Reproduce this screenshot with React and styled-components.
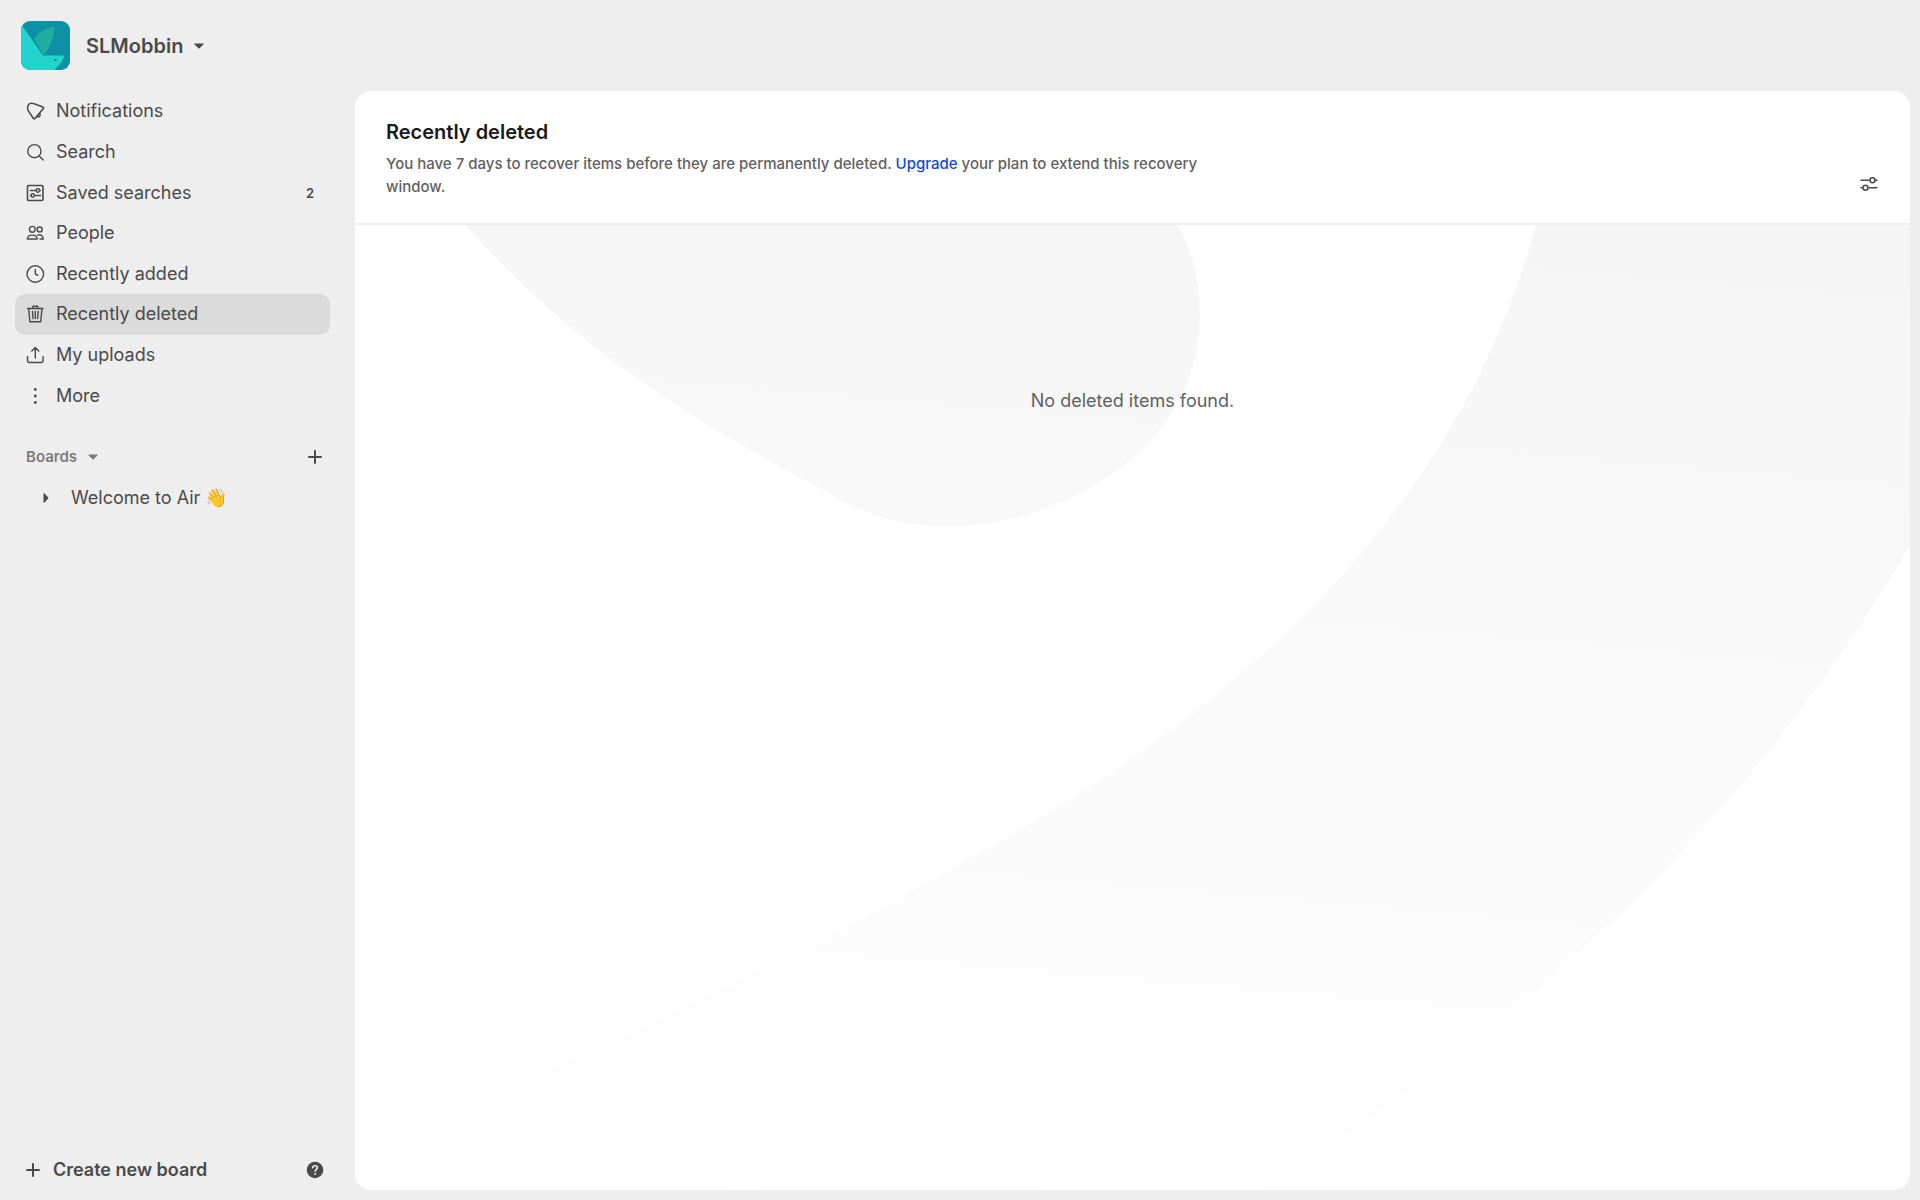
import React from 'react';
import styled, { createGlobalStyle } from 'styled-components';

const GlobalStyle = createGlobalStyle`
  * {
    box-sizing: border-box;
  }
  body {
    margin: 0;
    background: #eeeeee;
    color: #4a4a4a;
    font-family: Inter, 'Liberation Sans', sans-serif;
    font-size: 18px;
    line-height: 24px;
  }
  button {
    font: inherit;
    color: inherit;
    background: none;
    border: none;
    padding: 0;
    cursor: pointer;
  }
  a {
    color: inherit;
    text-decoration: none;
  }
  svg {
    display: block;
    flex-shrink: 0;
  }
`;

const Layout = styled.div`
  min-height: 100vh;
  display: grid;
  grid-template-columns: 355px minmax(0, 1fr);
  grid-template-rows: 91px minmax(0, 1fr);
`;

const TopBar = styled.header`
  grid-column: 1 / -1;
  display: flex;
  align-items: center;
  padding: 0 21px;
`;

const WorkspaceButton = styled.button`
  display: flex;
  align-items: center;
  gap: 16px;
  font-size: 20px;
  font-weight: 600;
`;

const WorkspaceName = styled.span`
  display: flex;
  align-items: center;
  gap: 11px;
`;

const Sidebar = styled.aside`
  display: flex;
  flex-direction: column;
  padding: 0 25px 10px 15px;
`;

const NavList = styled.ul`
  display: grid;
  grid-auto-rows: 1fr;
  height: 325px;
  list-style: none;
  margin: 0;
  padding: 0;
`;

const NavItem = styled.a`
  display: flex;
  align-items: center;
  gap: 11px;
  height: 100%;
  padding: 0 16px 0 10px;
  border-radius: 10px;
  background: ${({ $active }) => ($active ? '#dbdbdb' : 'transparent')};
`;

const NavCount = styled.span`
  margin-left: auto;
  font-size: 13px;
  font-weight: 600;
`;

const BoardsHeader = styled.div`
  display: flex;
  align-items: center;
  justify-content: space-between;
  height: 41px;
  margin-top: 20px;
  padding: 0 1px 0 11px;
`;

const BoardsToggle = styled.button`
  display: flex;
  align-items: center;
  gap: 11px;
  color: #7c7c7c;
  font-size: 15px;
  font-weight: 600;
`;

const IconButton = styled.button`
  display: flex;
  align-items: center;
  justify-content: center;
  width: 28px;
  height: 28px;
`;

const BoardItem = styled.a`
  display: flex;
  align-items: center;
  gap: 22px;
  height: 41px;
  padding-left: 28px;
`;

const SidebarFooter = styled.footer`
  display: flex;
  align-items: center;
  justify-content: space-between;
  height: 41px;
  margin-top: auto;
  padding: 0 1px 0 8px;
`;

const CreateButton = styled.button`
  display: flex;
  align-items: center;
  gap: 10px;
  font-weight: 600;
`;

const Panel = styled.main`
  display: flex;
  flex-direction: column;
  margin: 0 10px 10px 0;
  border-radius: 16px;
  background: #ffffff;
  overflow: hidden;
`;

const PanelHeader = styled.div`
  display: flex;
  align-items: flex-end;
  justify-content: space-between;
  padding: 27px 27px 25px 31px;
  border-bottom: 2px solid #eeeeee;
`;

const Title = styled.h1`
  margin: 0 0 6px;
  color: #1a1a1a;
  font-size: 20px;
  font-weight: 600;
  line-height: 28px;
`;

const Description = styled.p`
  max-width: 850px;
  margin: 0;
  color: #616161;
  font-size: 15px;
  font-weight: 500;
  line-height: 23px;
`;

const UpgradeLink = styled.a`
  color: #0f4bd8;
`;

const PanelBody = styled.section`
  position: relative;
  flex: 1;
  padding: 164px 20px;
  text-align: center;
  color: #616161;
`;

const Backdrop = styled.svg`
  position: absolute;
  inset: 0;
  width: 100%;
  height: 100%;
`;

const EmptyText = styled.p`
  position: relative;
  margin: 0;
`;

const Icon = ({ children }) => (
  <svg
    width="20"
    height="20"
    viewBox="0 0 20 20"
    fill="none"
    stroke="currentColor"
    strokeWidth="1.4"
    strokeLinecap="round"
    strokeLinejoin="round"
    aria-hidden="true"
  >
    {children}
  </svg>
);

const BellIcon = () => (
  <Icon>
    <path
      d="M2.8 5.4 3.9 3.2c1.6-1.2 4.200-1 6-.3l8 3c.7.3.9.9.5 1.500L9.900 17.500c-.5.6-1.300.5-1.600-.2L3 9.400c-.5-1.300-.6-2.700-.2-4Z"
      strokeWidth="1.6"
    />
    <path d="M12.600 15.800c1.700.5 2.900-.9 2.400-2.800" strokeWidth="1.6" />
  </Icon>
);

const SearchIcon = () => (
  <Icon>
    <circle cx="9.4" cy="9.2" r="6.6" />
    <path d="m14.200 14 4 4" />
  </Icon>
);

const SavedIcon = () => (
  <Icon>
    <rect x="2.5" y="2.5" width="15.500" height="15" rx="1" strokeWidth="1.6" />
    <path d="M5.500 7.500h5.500M14.500 7.500H15.500M5.500 12.500h.5M9.500 12.500h6" />
    <circle cx="12.800" cy="7.500" r="1.700" />
    <circle cx="7.700" cy="12.500" r="1.700" />
  </Icon>
);

const PeopleIcon = () => (
  <Icon>
    <circle cx="7.300" cy="6.300" r="2.900" />
    <circle cx="14.700" cy="6.500" r="2.500" />
    <path d="M2.300 16c.4-2.500 2.300-3.900 5-3.900s4.600 1.400 5 3.900ZM12.600 12.100c2.700-1 5.300.5 5.700 3.900h-3.300" />
  </Icon>
);

const ClockIcon = () => (
  <Icon>
    <circle cx="10.300" cy="10" r="8.300" />
    <path d="M10.300 5.500V10l2.600 1.300" />
  </Icon>
);

const TrashIcon = () => (
  <Icon>
    <path d="M2.600 4.500h15.400M7.300 4.500l.7-2.200h4.600l.7 2.200M3.600 4.500l1.300 13.200h10.800l1.300-13.200M7.500 7.500l.5 7M10.300 7.500v7M13.100 7.500l-.5 7" />
  </Icon>
);

const UploadIcon = () => (
  <Icon>
    <path d="M10.300 13V2.500M6.800 6l3.500-3.500L13.800 6M2.500 11.500v4c0 1.200.8 2 2 2h11.600c1.200 0 2-.8 2-2v-4" />
  </Icon>
);

const MoreIcon = () => (
  <Icon>
    <g fill="currentColor" stroke="none">
      <circle cx="10.300" cy="3.500" r="1.400" />
      <circle cx="10.300" cy="10" r="1.400" />
      <circle cx="10.300" cy="16.500" r="1.400" />
    </g>
  </Icon>
);

const PlusIcon = () => (
  <Icon>
    <path d="M10 4v12M4 10h12" strokeWidth="2" />
  </Icon>
);

const SlidersIcon = () => (
  <Icon>
    <path d="M2 6.200h8.500M16 6.200h2M2 13.800h1.500M9.500 13.800H18" strokeWidth="1.500" />
    <circle cx="13.500" cy="6.200" r="2.500" strokeWidth="1.500" />
    <circle cx="6.500" cy="13.800" r="2.500" strokeWidth="1.500" />
  </Icon>
);

const HelpIcon = () => (
  <Icon>
    <circle cx="10" cy="10" r="8.300" fill="currentColor" stroke="none" />
    <path
      d="M7.700 7.800c.2-2.800 4.700-2.700 4.700 0 0 1.500-2.200 1.700-2.200 3.400"
      stroke="#eeeeee"
      strokeWidth="1.600"
    />
    <circle cx="10.200" cy="14" r="1" fill="#eeeeee" stroke="none" />
  </Icon>
);

const CaretDown = () => (
  <svg width="10" height="6" viewBox="0 0 10 6" fill="currentColor" aria-hidden="true">
    <path d="M1 .5h8c.7 0 .9.700.4 1.100L5.600 5.200c-.4.4-.8.4-1.200 0L.6 1.600C.1 1.200.3.5 1 .5Z" />
  </svg>
);

const CaretRight = () => (
  <svg width="6" height="10" viewBox="0 0 6 10" fill="currentColor" aria-hidden="true">
    <path d="M.5 1v8c0 .7.700.9 1.100.4l3.600-3.800c.4-.4.4-.8 0-1.200L1.600.6C1.200.1.5.3.5 1Z" />
  </svg>
);

const Logo = () => (
  <svg width="49" height="49" viewBox="0 0 49 49" aria-hidden="true">
    <clipPath id="logo-clip">
      <rect width="49" height="49" rx="9" />
    </clipPath>
    <g clipPath="url(#logo-clip)">
      <path d="M0 0h49v49H0Z" fill="#0e90a5" />
      <path d="M13 18C18 11 25 7 34 5.500 33 15 29 26 23 34Z" fill="#1fad9f" />
      <path d="M0 3 22 34.500h21.500C42 40 38 45 33 49H0Z" fill="#22d3cb" />
      <circle cx="34.500" cy="39" r="1" fill="#0b5f70" />
    </g>
  </svg>
);

const navItems = [
  { label: 'Notifications', icon: BellIcon },
  { label: 'Search', icon: SearchIcon },
  { label: 'Saved searches', icon: SavedIcon, count: 2 },
  { label: 'People', icon: PeopleIcon },
  { label: 'Recently added', icon: ClockIcon },
  { label: 'Recently deleted', icon: TrashIcon, active: true },
  { label: 'My uploads', icon: UploadIcon },
  { label: 'More', icon: MoreIcon },
];

const App = () => {
  return (
    <>
      <GlobalStyle />
      <Layout>
        <TopBar>
          <WorkspaceButton>
            <Logo />
            <WorkspaceName>
              SLMobbin <CaretDown />
            </WorkspaceName>
          </WorkspaceButton>
        </TopBar>
        <Sidebar>
          <nav>
            <NavList>
              {navItems.map(({ label, icon: ItemIcon, count, active }) => (
                <li key={label}>
                  <NavItem href="#" $active={active}>
                    <ItemIcon />
                    {label}
                    {count && <NavCount>{count}</NavCount>}
                  </NavItem>
                </li>
              ))}
            </NavList>
          </nav>
          <BoardsHeader>
            <BoardsToggle>
              Boards <CaretDown />
            </BoardsToggle>
            <IconButton aria-label="Add board">
              <PlusIcon />
            </IconButton>
          </BoardsHeader>
          <BoardItem href="#">
            <CaretRight />
            Welcome to Air 👋
          </BoardItem>
          <SidebarFooter>
            <CreateButton>
              <PlusIcon />
              Create new board
            </CreateButton>
            <IconButton aria-label="Help">
              <HelpIcon />
            </IconButton>
          </SidebarFooter>
        </Sidebar>
        <Panel>
          <PanelHeader>
            <div>
              <Title>Recently deleted</Title>
              <Description>
                You have 7 days to recover items before they are permanently deleted.{' '}
                <UpgradeLink href="#">Upgrade</UpgradeLink> your plan to extend this recovery
                window.
              </Description>
            </div>
            <IconButton aria-label="Display options">
              <SlidersIcon />
            </IconButton>
          </PanelHeader>
          <PanelBody>
            <Backdrop viewBox="0 0 1555 966" preserveAspectRatio="xMidYMin slice" aria-hidden="true">
              <defs>
                <linearGradient id="swoosh" gradientUnits="userSpaceOnUse" x1="860" y1="-60" x2="770" y2="1000">
                  <stop offset="0" stopColor="#f5f5f5" />
                  <stop offset="1" stopColor="#ffffff" />
                </linearGradient>
              </defs>
              <g fill="url(#swoosh)">
                <path d="M110 0C215 118 325 190 480 271C535 308 625 312 700 280C795 240 845 172 845 90C845 58 838 28 823 0Z" />
                <path d="M1181 0C1117 235 950 450 615 633C400 760 180 850 -5 933V966H905C1150 810 1380 620 1555 320V0Z" />
              </g>
            </Backdrop>
            <EmptyText>No deleted items found.</EmptyText>
          </PanelBody>
        </Panel>
      </Layout>
    </>
  );
};

export default App;
